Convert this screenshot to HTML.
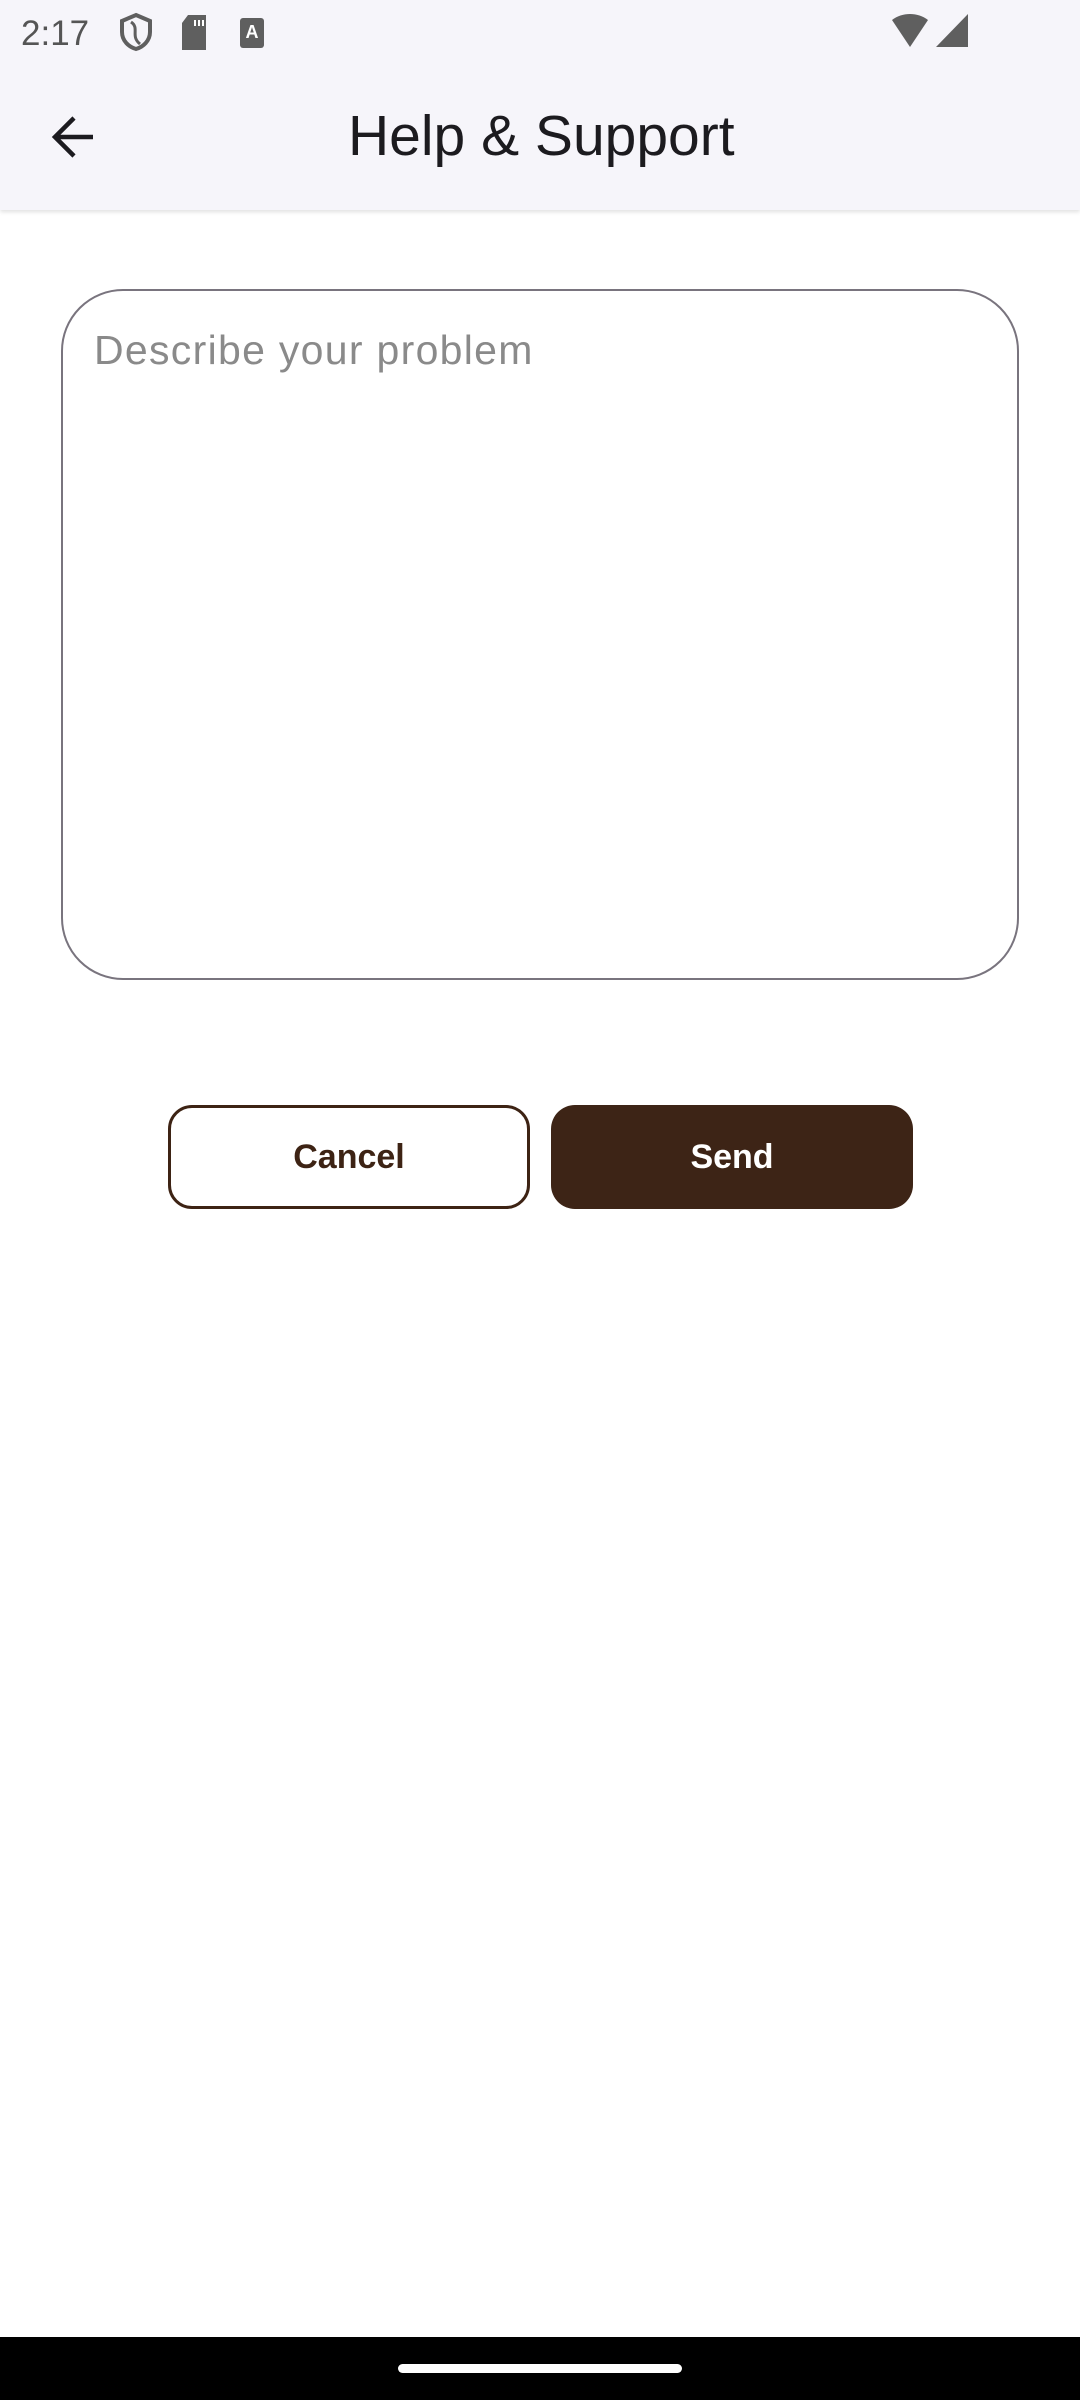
<!DOCTYPE html>
<html><head><meta charset="utf-8"><style>
*{margin:0;padding:0;box-sizing:border-box}
body{width:1080px;height:2400px;background:#fff;position:relative;overflow:hidden;font-family:"Liberation Sans",sans-serif}
.hdr{position:absolute;left:0;top:0;width:1080px;height:210px;background:#f6f5fa;box-shadow:0 2px 4px rgba(0,0,0,0.12)}
.time{position:absolute;left:21px;top:14px;font-size:35px;color:#555}
.title{position:absolute;left:348px;top:103px;font-size:57px;color:#1c1b1f;white-space:nowrap}
.ta{position:absolute;left:61px;top:289px;width:958px;height:691px;border:2px solid #79747e;border-radius:62px}
.ph{position:absolute;left:94px;top:327px;font-size:41px;color:#8a8a8a;letter-spacing:1.3px;white-space:nowrap}
.btn{position:absolute;top:1105px;height:104px;width:362px;border-radius:24px;font-size:34px;font-weight:bold;display:flex;align-items:center;justify-content:center}
.c{left:168px;border:3px solid #3d2314;color:#3d2314;background:#fff}
.s{left:551px;background:#3d2416;color:#fff}
.nav{position:absolute;left:0;top:2337px;width:1080px;height:63px;background:#000}
.pill{position:absolute;left:398px;top:2364px;width:284px;height:9px;border-radius:5px;background:#fff}
</style></head><body>
<div class="hdr">
<div class="time">2:17</div>
<svg style="position:absolute;left:118px;top:12px" width="36" height="40" viewBox="0 0 36 40"><path d="M18 3 L32 9 V20 C32 29 25 35 18 37 C11 35 4 29 4 20 V9 Z" fill="none" stroke="#5f5f5f" stroke-width="4"/><path d="M13 10 C22 16 12 24 22 32" fill="none" stroke="#5f5f5f" stroke-width="3"/></svg>
<svg style="position:absolute;left:180px;top:15px" width="28" height="35" viewBox="0 0 28 35"><path d="M8 0 H26 V35 H2 V8 Z" fill="#5f5f5f"/><rect x="14" y="5" width="2" height="6" fill="#fff"/><rect x="18" y="5" width="2" height="6" fill="#fff"/><rect x="22" y="5" width="2" height="6" fill="#fff"/></svg>
<div style="position:absolute;left:240px;top:18px;width:24px;height:30px;background:#5f5f5f;border-radius:3px;color:#fff;font-size:18px;font-weight:bold;text-align:center;line-height:28px">A</div>
<svg style="position:absolute;left:890px;top:14px" width="80" height="34" viewBox="0 0 80 34"><path d="M2 6 C12 -2 28 -2 38 6 L20 33 Z" fill="#5f5f5f"/><path d="M78 0 V33 H46 Z" fill="#5f5f5f"/></svg>
<svg style="position:absolute;left:50px;top:113px" width="46" height="48" viewBox="0 0 46 48"><path d="M43 24 H6 M24 5 L5 24 L24 43" fill="none" stroke="#1c1b1f" stroke-width="4.5"/></svg>
<div class="title">Help &amp; Support</div>
</div>
<div class="ta"></div>
<div class="ph">Describe your problem</div>
<div class="btn c">Cancel</div>
<div class="btn s">Send</div>
<div class="nav"></div><div class="pill"></div>
</body></html>
